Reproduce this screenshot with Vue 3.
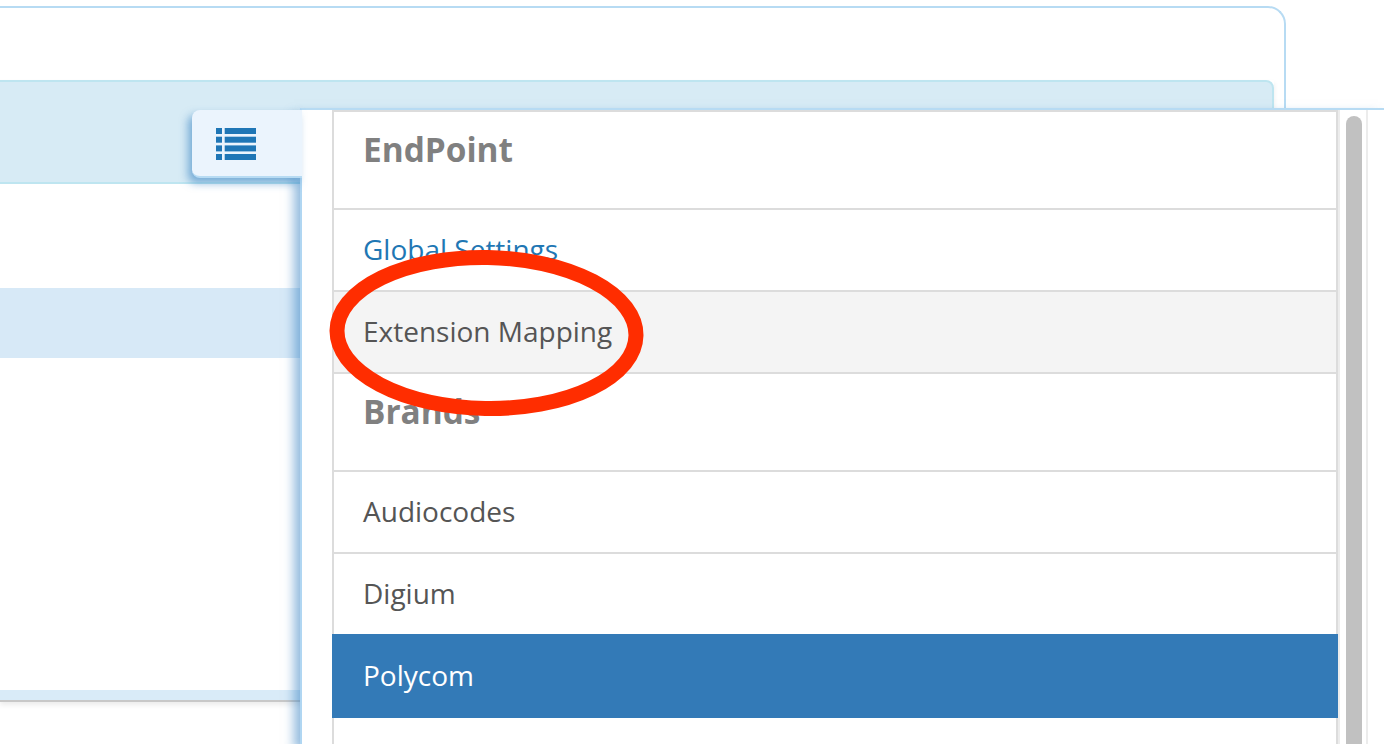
<template>
  <div class="page">
    <!-- Page behind the drawer -->
    <div class="card">
      <div class="panel">
        <div class="panel-head"></div>
        <div class="panel-row"></div>
        <div class="panel-row is-selected"></div>
        <div class="panel-row is-last"></div>
        <div class="panel-foot"></div>
      </div>
    </div>

    <!-- Drawer toggle -->
    <div class="drawer-tab">
      <svg width="40" height="32" viewBox="0 0 40 32" fill="#1f76b6">
        <g v-for="top in iconRows" :key="top">
          <rect x="0" :y="top" width="6" height="6" />
          <rect x="8.7" :y="top" width="31.3" height="6" />
        </g>
      </svg>
    </div>

    <!-- Side drawer -->
    <div class="drawer">
      <div class="nav-list">
        <div v-for="item in items" :key="item.label" class="nav-item" :class="item.kind">
          {{ item.label }}
        </div>
      </div>
      <div class="scroll-track">
        <div class="scroll-thumb"></div>
      </div>
    </div>

    <!-- Hand drawn annotation -->
    <svg class="annotation" width="330" height="180" viewBox="0 0 330 180">
      <ellipse cx="160.5" cy="91" rx="149.5" ry="75.5" fill="none" stroke="#ff2d00" stroke-width="15" transform="rotate(1 160.5 91)" />
    </svg>
  </div>
</template>

<script setup>
const iconRows = [0, 8.7, 17.4, 26];

const items = [
  { label: 'EndPoint', kind: 'heading' },
  { label: 'Global Settings', kind: 'link' },
  { label: 'Extension Mapping', kind: 'hover' },
  { label: 'Brands', kind: 'heading' },
  { label: 'Audiocodes', kind: '' },
  { label: 'Digium', kind: 'before-active' },
  { label: 'Polycom', kind: 'active' }
];
</script>

<style>
html, body {
  margin: 0;
  background: #fff;
  overflow: hidden;
}
</style>

<style scoped>
.page {
  position: relative;
  width: 1384px;
  height: 744px;
  overflow: hidden;
  background: #fff;
  font-family: "Open Sans", "Liberation Sans", sans-serif;
  padding-top: 6px;
  box-sizing: border-box;
}

.card {
  width: 1286px;
  box-sizing: border-box;
  padding: 72px 10px 0 0;
  border-top: 2px solid #b7dbf3;
  border-right: 2px solid #b7dbf3;
  border-top-right-radius: 18px;
}

.panel {
  box-shadow: 0 3px 5px rgba(0, 0, 0, 0.08);
  border-bottom: 2px solid #c8c8c8;
}

.panel-head {
  height: 100px;
  background: #d7ebf5;
  border: 2px solid #bee5f0;
  border-left: none;
  border-top-right-radius: 8px;
}

.panel-row {
  height: 104px;
}

.panel-row.is-selected {
  height: 70px;
  background: #d7e9f7;
}

.panel-row.is-last {
  height: 332px;
}

.panel-foot {
  height: 10px;
  background: #d9ebf8;
}

.drawer-tab {
  position: absolute;
  left: 192px;
  top: 110px;
  width: 110px;
  height: 68px;
  padding: 18px 0 0 24px;
  box-sizing: border-box;
  background: #ebf4fd;
  border-bottom: 2px solid #b7dbf3;
  border-radius: 8px 0 0 8px;
  box-shadow: -4px 5px 9px rgba(40, 120, 190, 0.55);
  z-index: 3;
}

.drawer {
  position: absolute;
  left: 300px;
  top: 108px;
  right: 0;
  bottom: 0;
  display: flex;
  padding-left: 30px;
  background: #fff;
  border-top: 2px solid #b7dbf3;
  border-left: 2px solid #b0d6f2;
  box-shadow: -6px 6px 10px rgba(40, 120, 190, 0.5);
  z-index: 2;
}

.nav-list {
  width: 1006px;
  box-sizing: border-box;
  border-left: 2px solid #dcdcdc;
  border-right: 2px solid #dcdcdc;
}

.nav-item {
  height: 82px;
  padding: 0 0 2px 29px;
  box-sizing: border-box;
  display: flex;
  align-items: center;
  border-bottom: 2px solid #dcdcdc;
  font-size: 28px;
  color: #555;
}

.nav-item.heading {
  height: 98px;
  align-items: flex-start;
  padding-top: 14px;
  font-size: 33.4px;
  font-weight: 700;
  color: #808080;
}

.nav-item.heading:first-child {
  height: 100px;
  border-top: 2px solid #dcdcdc;
}

.nav-item.link {
  color: #1f77b4;
}

.nav-item.hover {
  background: #f4f4f4;
}

.nav-item.before-active {
  height: 80px;
  border-bottom: none;
}

.nav-item.active {
  height: 84px;
  margin: 0 -2px;
  padding-left: 31px;
  background: #337ab7;
  border-bottom: none;
  color: #fff;
}

.scroll-track {
  width: 30px;
  box-sizing: border-box;
  padding: 6px 0 0 6px;
  border-left: 2px solid #ececec;
  border-right: 2px solid #ececec;
}

.scroll-thumb {
  width: 16px;
  height: 700px;
  background: #c1c1c1;
  border-radius: 8px;
}

.annotation {
  position: absolute;
  left: 326px;
  top: 242px;
  z-index: 4;
}
</style>
